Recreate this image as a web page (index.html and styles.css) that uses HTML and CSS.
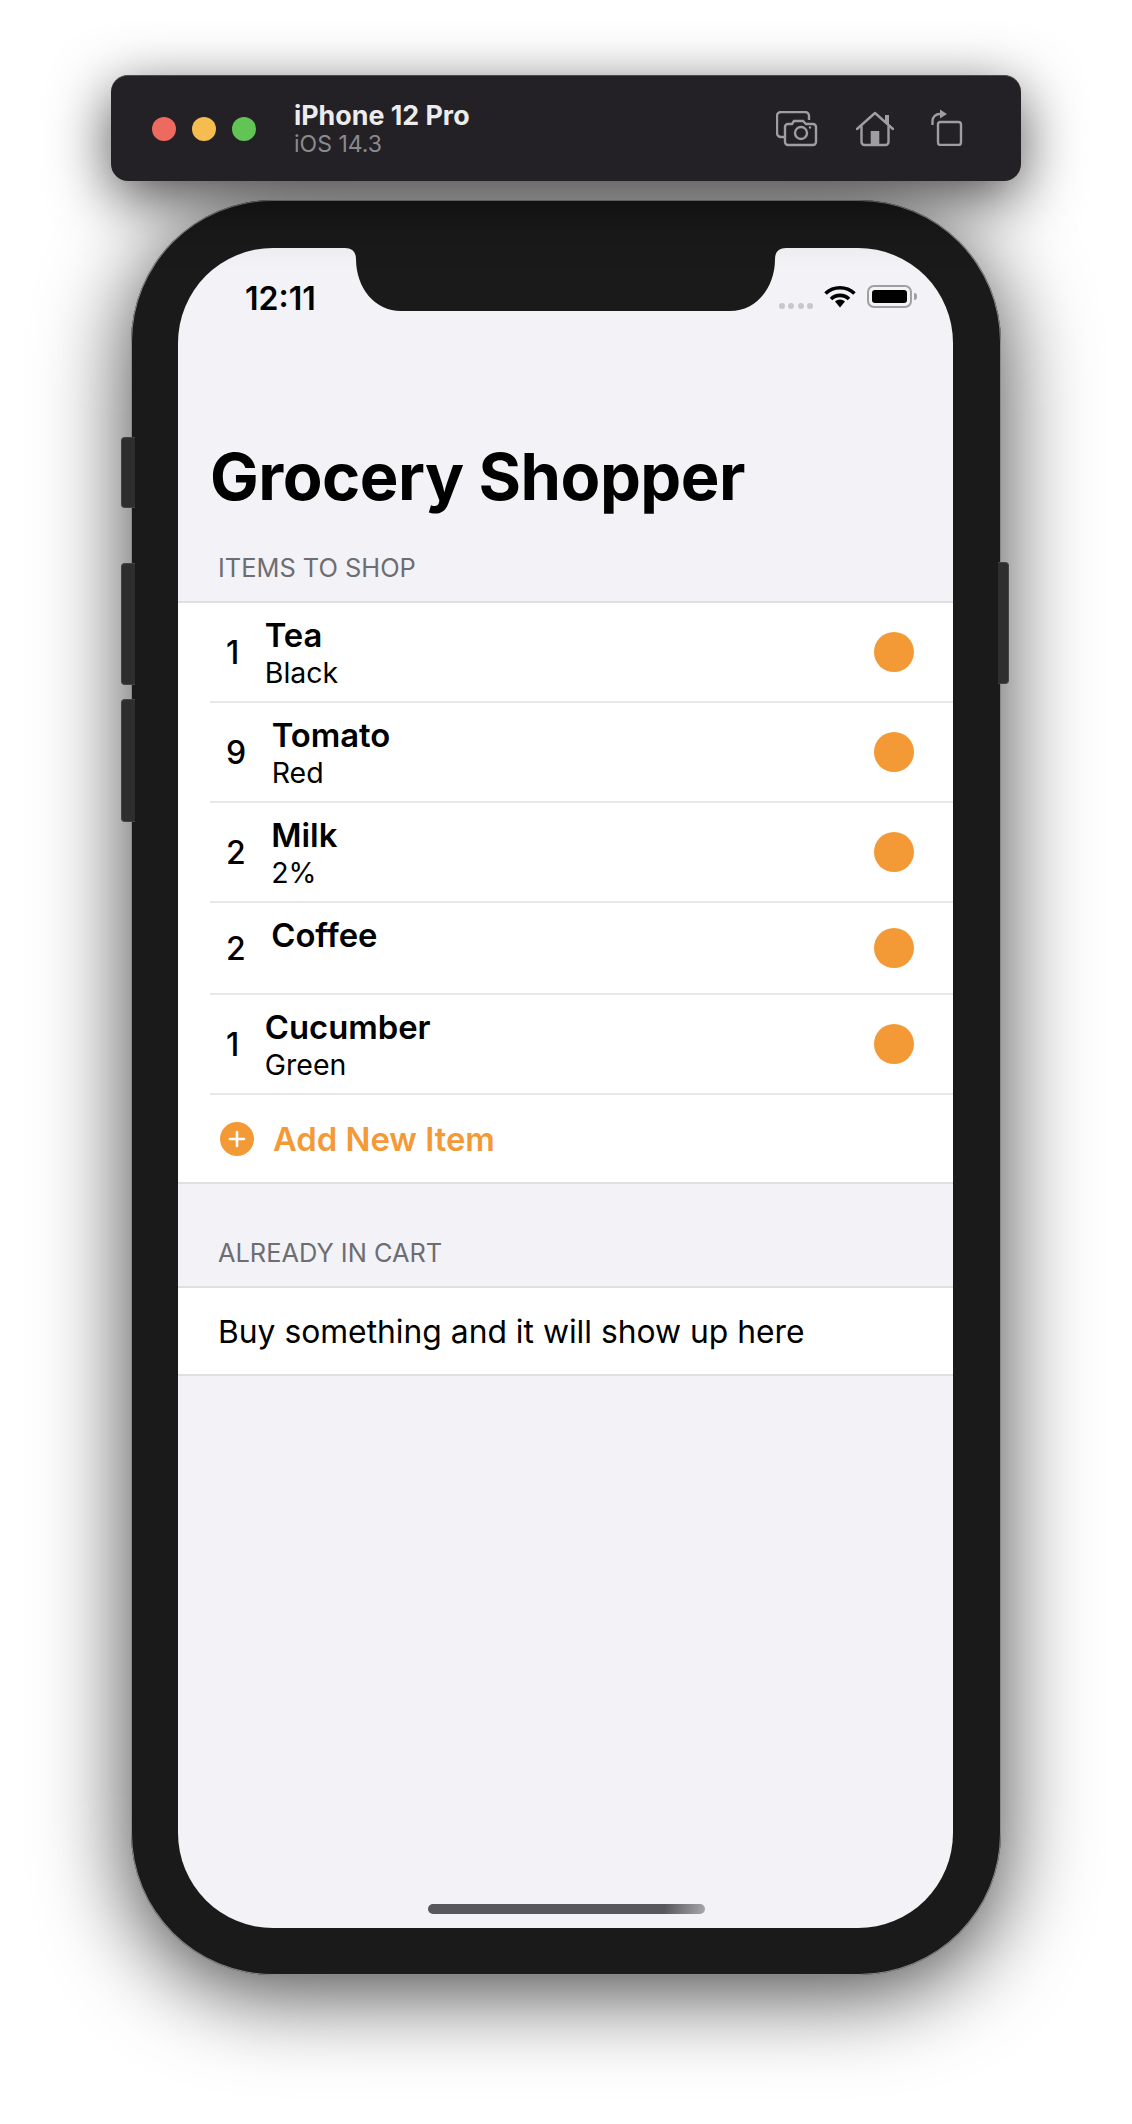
FILE: index.html
```html
<!DOCTYPE html>
<html lang="en">
<head>
    <meta charset="UTF-8">
    <meta name="viewport" content="width=device-width, initial-scale=1.0">
    <title>Grocery Shopper</title>
    <link rel="stylesheet" href="styles.css">
</head>
<body>
    <div class="toolbar">
        <div class="lights">
            <span class="light red"></span>
            <span class="light yellow"></span>
            <span class="light green"></span>
        </div>
        <div class="device">
            <div class="device-name">iPhone 12 Pro</div>
            <div class="device-os">iOS 14.3</div>
        </div>
        <div class="tools">
            <svg class="tool-camera" width="42" height="36" viewBox="0 0 42 36" fill="none" stroke="#9e9da2" stroke-width="2.4">
                <path d="M8 26H5a4 4 0 0 1-4-4V5a4 4 0 0 1 4-4H29a4 4 0 0 1 4 4V9"/>
                <path d="M12 13H16L18 10H27L30 13H37a3 3 0 0 1 3 3V31a3 3 0 0 1-3 3H12a3 3 0 0 1-3-3V16a3 3 0 0 1 3-3Z"/>
                <circle cx="25" cy="22" r="6"/>
                <circle cx="34" cy="16.5" r="1.2" fill="#9e9da2" stroke="none"/>
            </svg>
            <svg class="tool-home" width="38" height="36" viewBox="0 0 38 36" fill="none" stroke="#9e9da2" stroke-width="2.4">
                <path d="M1 18L19 2L37 18" stroke-linecap="round" stroke-linejoin="round"/>
                <path d="M5.5 15V31a3 3 0 0 0 3 3H29.5a3 3 0 0 0 3-3V15"/>
                <path d="M29 4H33V14L29 10Z" fill="#9e9da2" stroke="none"/>
                <rect x="14.7" y="20" width="8.6" height="14" fill="#9e9da2" stroke="none"/>
            </svg>
            <svg class="tool-rotate" width="32" height="37" viewBox="0 0 32 37" fill="none" stroke="#9e9da2" stroke-width="2.4">
                <rect x="7" y="13" width="23" height="23" rx="2.5"/>
                <path d="M1.5 16V12A7 7 0 0 1 9 5"/>
                <path d="M9 0.5L16 5L9 9.5Z" fill="#9e9da2" stroke="none"/>
            </svg>
        </div>
    </div>

    <div class="phone">
        <span class="side-btn mute"></span>
        <span class="side-btn vol-up"></span>
        <span class="side-btn vol-down"></span>
        <span class="side-btn power"></span>

        <div class="screen">
            <svg class="notch" width="441" height="63" viewBox="0 0 441 63">
                <path d="M0 0C7 0 11 4 11 11C11 40 30 63 56 63H385C411 63 430 40 430 11C430 4 434 0 441 0Z" fill="#1a1a1a"/>
            </svg>

            <div class="status-bar">
                <span class="clock">12:11</span>
                <div class="status-icons">
                    <div class="signal"><i></i><i></i><i></i><i></i></div>
                    <svg class="wifi" width="32" height="24" viewBox="0 0 32 24" fill="none" stroke="#000" stroke-width="3.6">
                        <path d="M1.5 9.5A21 21 0 0 1 30.5 9.5"/>
                        <path d="M7 15A13 13 0 0 1 25 15"/>
                        <path d="M11 17.5A7.5 7.5 0 0 1 21 17.5L16 23.5Z" fill="#000" stroke="none"/>
                    </svg>
                    <div class="battery"><div class="battery-level"></div></div>
                    <div class="battery-cap"></div>
                </div>
            </div>

            <h1 class="large-title">Grocery Shopper</h1>

            <div class="section-header">ITEMS TO SHOP</div>
            <ul class="list">
                <li class="row">
                    <div class="row-inner">
                        <span class="qty">1</span>
                        <div class="item"><div class="item-name">Tea</div><div class="item-note">Black</div></div>
                        <span class="dot"></span>
                    </div>
                </li>
                <li class="row">
                    <div class="row-inner">
                        <span class="qty">9</span>
                        <div class="item"><div class="item-name">Tomato</div><div class="item-note">Red</div></div>
                        <span class="dot"></span>
                    </div>
                </li>
                <li class="row">
                    <div class="row-inner">
                        <span class="qty">2</span>
                        <div class="item"><div class="item-name">Milk</div><div class="item-note">2%</div></div>
                        <span class="dot"></span>
                    </div>
                </li>
                <li class="row row-short">
                    <div class="row-inner">
                        <span class="qty">2</span>
                        <div class="item"><div class="item-name">Coffee</div></div>
                        <span class="dot"></span>
                    </div>
                </li>
                <li class="row">
                    <div class="row-inner">
                        <span class="qty">1</span>
                        <div class="item"><div class="item-name">Cucumber</div><div class="item-note">Green</div></div>
                        <span class="dot"></span>
                    </div>
                </li>
                <li class="add-row">
                    <svg class="add-icon" width="34" height="34" viewBox="0 0 34 34">
                        <circle cx="17" cy="17" r="17" fill="#f39a37"/>
                        <path d="M17 10V24M10 17H24" stroke="#fff" stroke-width="2.6" stroke-linecap="round"/>
                    </svg>
                    <span class="add-label">Add New Item</span>
                </li>
            </ul>

            <div class="section-header section-second">ALREADY IN CART</div>
            <ul class="list">
                <li class="empty-row">Buy something and it will show up here</li>
            </ul>

            <div class="home-bar"></div>
        </div>
    </div>
</body>
</html>
```

FILE: styles.css
```css
* {
    box-sizing: border-box;
}

body {
    background-color: #ffffff;
    font-family: 'Inter', 'Roboto', sans-serif;
    margin: 0;
    padding: 75px 111px 0;
    height: 2124px;
    overflow: hidden;
}

.toolbar {
    display: flex;
    align-items: center;
    height: 106px;
    padding: 0 41px;
    background-color: #232126;
    border-radius: 17px;
    border-top: 1px solid #4a494d;
    box-shadow: 0 16px 60px rgba(0, 0, 0, 0.7);
    position: relative;
    z-index: 2;
}

.lights {
    display: flex;
    gap: 16px;
}

.light {
    width: 24px;
    height: 24px;
    border-radius: 50%;
}

.red { background-color: #ee6a5f; }
.yellow { background-color: #f5bd4f; }
.green { background-color: #61c454; }

.device {
    margin-left: 38px;
}

.device-name {
    color: #ececec;
    font-size: 26.8px;
    line-height: 30px;
    font-weight: 700;
}

.device-os {
    color: #8a8a8e;
    font-size: 23px;
    line-height: 28px;
}

.tools {
    margin-left: auto;
    display: flex;
    align-items: center;
    margin-right: 17px;
}

.tool-home { margin-left: 38px; }
.tool-rotate { margin-left: 37px; margin-top: -2px; }

.phone {
    position: relative;
    height: 1775px;
    margin: 19px 20px 0;
    padding: 48px 48px 47px 47px;
    background-color: #1a1a1a;
    border-radius: 142px;
    box-shadow: inset 0 0 0 1px #8a8a8a, 0 16px 90px rgba(0, 0, 0, 0.75);
}

.side-btn {
    position: absolute;
    width: 14px;
    background-color: #2e2e2e;
    border: 1px solid #444;
    border-right: none;
    border-radius: 4px 0 0 4px;
    left: -10px;
}

.mute { top: 237px; height: 71px; }
.vol-up { top: 363px; height: 122px; }
.vol-down { top: 499px; height: 123px; }

.power {
    left: auto;
    right: -8px;
    top: 362px;
    width: 11px;
    height: 122px;
    border: 1px solid #444;
    border-left: none;
    border-radius: 0 4px 4px 0;
}

.screen {
    position: relative;
    height: 100%;
    background-color: #f2f2f7;
    border-radius: 95px;
    overflow: hidden;
}

.notch {
    position: absolute;
    top: 0;
    left: 167px;
}

.status-bar {
    display: flex;
    justify-content: space-between;
    align-items: flex-start;
    height: 188px;
    padding: 31px 36px 0 67px;
}

.clock {
    font-size: 32px;
    line-height: 40px;
    font-weight: 600;
    color: #000;
}

.status-icons {
    display: flex;
    align-items: flex-start;
    padding-top: 6px;
}

.signal {
    display: flex;
    gap: 3.5px;
    margin-top: 18px;
    margin-right: 11px;
}

.signal i {
    width: 6px;
    height: 6px;
    border-radius: 50%;
    background-color: #c8c8cc;
}

.wifi {
    margin-top: -1px;
    margin-right: 11px;
}

.battery {
    width: 45px;
    height: 23px;
    padding: 3px;
    border: 2px solid #a0a0a3;
    border-radius: 7px;
}

.battery-level {
    height: 100%;
    background-color: #000;
    border-radius: 3px;
}

.battery-cap {
    width: 3px;
    height: 7px;
    margin-top: 8px;
    margin-left: 2px;
    background-color: #a0a0a3;
    border-radius: 0 3px 3px 0;
}

.large-title {
    margin: 0;
    padding-left: 32px;
    height: 83px;
    font-size: 65px;
    line-height: 82px;
    font-weight: 700;
    color: #000;
    letter-spacing: -0.5px;
}

.section-header {
    height: 82px;
    padding: 34px 40px 0;
    font-size: 25.4px;
    line-height: 30px;
    color: #6d6d72;
}

.section-second {
    height: 102px;
    padding-top: 54px;
}

.list {
    margin: 0;
    padding: 0;
    list-style: none;
    background-color: #ffffff;
    border-top: 2px solid #dedee3;
    border-bottom: 2px solid #dedee3;
}

.row {
    padding-left: 32px;
}

.row-inner {
    display: flex;
    align-items: center;
    height: 100px;
    padding: 0 39px 0 16px;
    border-bottom: 2px solid #e8e8ea;
}

.row-short .row-inner {
    height: 92px;
}

.qty {
    font-size: 32px;
    font-weight: 500;
    color: #000;
    margin-right: 25.5px;
}

.item {
    align-self: flex-start;
    padding-top: 13px;
}

.item-name {
    font-size: 32.8px;
    line-height: 38px;
    font-weight: 600;
    color: #000;
}

.item-note {
    font-size: 28.5px;
    line-height: 38px;
    color: #000;
}

.dot {
    width: 40px;
    height: 40px;
    margin-left: auto;
    border-radius: 50%;
    background-color: #f39a37;
}

.add-row {
    display: flex;
    align-items: center;
    height: 87px;
    padding-left: 42px;
}

.add-label {
    margin-left: 19px;
    font-size: 32.8px;
    font-weight: 600;
    color: #f39a37;
}

.empty-row {
    display: flex;
    align-items: center;
    height: 86px;
    padding-left: 40px;
    font-size: 31.8px;
    color: #000;
}

.home-bar {
    position: absolute;
    left: 250px;
    bottom: 14px;
    width: 277px;
    height: 10px;
    border-radius: 5px;
    background: linear-gradient(100deg, #58585a 85%, #a8a8aa 100%);
}
```
